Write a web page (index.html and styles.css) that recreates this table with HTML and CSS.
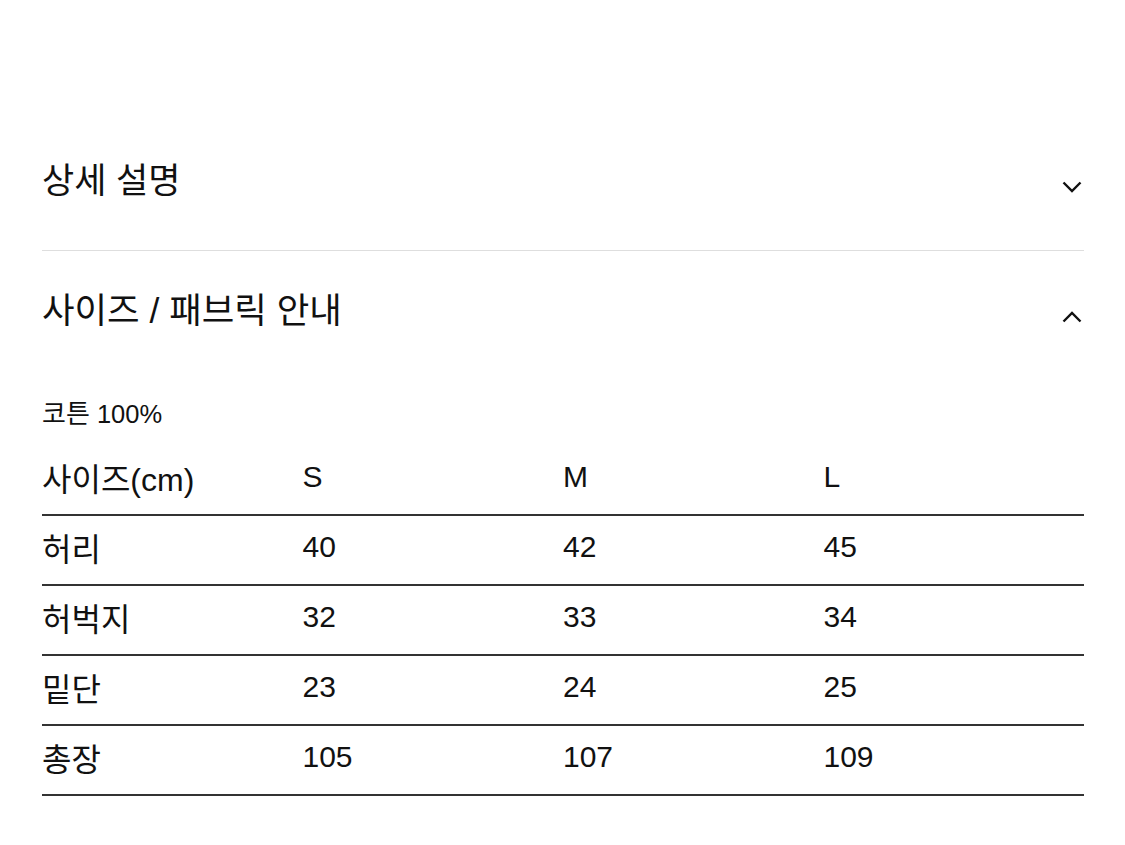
FILE: index.html
```html
<!DOCTYPE html>
<html lang="ko">
<head>
<meta charset="utf-8">
<link rel="stylesheet" href="styles.css">
</head>
<body>
<main class="page">
  <section class="acc">
    <div class="acc-head">
      <h2 class="acc-title">상세 설명</h2>
      <svg class="chev" viewBox="0 0 20 12" width="20" height="12"><path d="M1.5 1.5 L10 10 L18.5 1.5" fill="none" stroke="#111" stroke-width="2.4"/></svg>
    </div>
  </section>
  <section class="acc open">
    <div class="acc-head">
      <h2 class="acc-title">사이즈 / 패브릭 안내</h2>
      <svg class="chev up" viewBox="0 0 20 12" width="20" height="12"><path d="M1.5 10.5 L10 2 L18.5 10.5" fill="none" stroke="#111" stroke-width="2.4"/></svg>
    </div>
    <div class="acc-body">
      <p class="fabric"><span class="ko">코튼</span> 100%</p>
      <table class="size">
        <thead>
          <tr><th>사이즈(cm)</th><th>S</th><th>M</th><th>L</th></tr>
        </thead>
        <tbody>
          <tr><td>허리</td><td>40</td><td>42</td><td>45</td></tr>
          <tr><td>허벅지</td><td>32</td><td>33</td><td>34</td></tr>
          <tr><td>밑단</td><td>23</td><td>24</td><td>25</td></tr>
          <tr><td>총장</td><td>105</td><td>107</td><td>109</td></tr>
        </tbody>
      </table>
    </div>
  </section>
</main>
</body>
</html>
```
FILE: styles.css
```css
html, body {
  margin: 0;
  padding: 0;
  background: #fff;
}
body {
  font-family: "Liberation Sans", "Noto Sans CJK KR", sans-serif;
  color: #111;
}
.page {
  padding: 120px 41px 0 42px;
}
.acc-head {
  height: 130px;
  display: flex;
  align-items: center;
  justify-content: space-between;
}
.acc:first-child {
  border-bottom: 1px solid #dedede;
}
.acc-title {
  margin: -15px 0 0 0;
  font-size: 35px;
  font-weight: 400;
}
.open .acc-title {
  margin-top: -18px;
  font-size: 35.4px;
}
.chev {
  margin-right: 2px;
  margin-top: 4px;
}
.chev.up {
  margin-top: 2px;
}
.acc-body {
  padding-top: 2px;
}
.fabric {
  margin: 0;
  font-size: 25.5px;
  line-height: 62px;
  height: 63px;
}
.fabric .ko {
  font-size: 26px;
}
.size {
  width: 100%;
  border-collapse: collapse;
  table-layout: fixed;
  font-size: 30px;
}
.size th, .size td {
  text-align: left;
  font-weight: 400;
  padding: 0 0 7px 0;
  height: 61px;
  border-bottom: 2px solid #333;
}
.size th:first-child, .size td:first-child {
  font-size: 32px;
}
```
